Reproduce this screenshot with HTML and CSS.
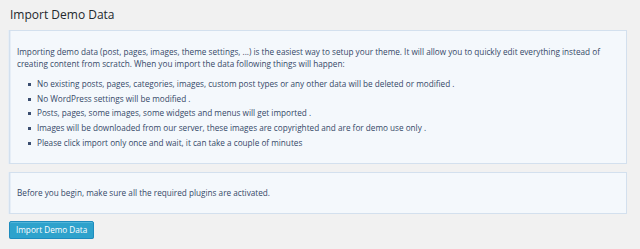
FILE: index.html
```html
<!DOCTYPE html>
<html>
<head>
<meta charset="utf-8">
<link rel="stylesheet" href="styles.css">
</head>
<body>
<div class="page">
  <h2 class="title">Import Demo Data</h2>
  <div class="box box-intro">
    <p class="lead">Importing demo data (post, pages, images, theme settings, ...) is the easiest way to setup your theme. It will allow you to quickly edit everything instead of creating content from scratch. When you import the data following things will happen:</p>
    <ul class="list">
      <li>No existing posts, pages, categories, images, custom post types or any other data will be deleted or modified .</li>
      <li>No WordPress settings will be modified .</li>
      <li>Posts, pages, some images, some widgets and menus will get imported .</li>
      <li>Images will be downloaded from our server, these images are copyrighted and are for demo use only .</li>
      <li>Please click import only once and wait, it can take a couple of minutes</li>
    </ul>
  </div>
  <div class="box box-note">
    <p class="note">Before you begin, make sure all the required plugins are activated.</p>
  </div>
  <button class="btn">Import Demo Data</button>
</div>
</body>
</html>
```
FILE: styles.css
```css
html, body {
  margin: 0;
  padding: 0;
  background: #f1f1f1;
}
body {
  font-family: "Open Sans", "Noto Sans", sans-serif;
  color: #344868;
}
.page {
  padding: 6px 13px 0 9px;
  display: flex;
  flex-direction: column;
  align-items: flex-start;
}
.title {
  font-size: 12px;
  font-weight: 400;
  color: #23282d;
  margin: 0 0 6px 1px;
  line-height: 18px;
}
.box {
  align-self: stretch;
  background: #f4f8fc;
  border: 1px solid #d3e0ee;
  box-shadow: inset 1px 0 0 #e6eef7, -1px 0 0 #e8eef5;
  box-sizing: border-box;
}
.box-intro {
  padding: 15px 7px 12px 7px;
  margin-bottom: 8px;
}
.lead {
  margin: 0 0 7px 0;
  font-size: 8.2px;
  line-height: 12px;
}
.list {
  margin: 0;
  padding: 0 0 0 8px;
  list-style: none;
}
.list li {
  font-size: 8.2px;
  line-height: 14.7px;
  position: relative;
  padding-left: 12px;
}
.list li::before {
  content: "";
  position: absolute;
  left: 3px;
  top: 6px;
  width: 3px;
  height: 3px;
  background: #3a4e70;
}
.box-note {
  padding: 14px 7px 14px 7px;
  margin-bottom: 7px;
}
.note {
  margin: 0;
  font-size: 8.2px;
  line-height: 12px;
}
.btn {
  font-family: "Open Sans", "Noto Sans", sans-serif;
  font-size: 8.2px;
  color: #fff;
  background: #2ea2cc;
  border: 1px solid #1e8cbe;
  border-radius: 2px;
  box-shadow: inset 0 1px 0 rgba(120,200,230,.5), 0 1px 0 rgba(0,0,0,.15);
  height: 18px;
  line-height: 14px;
  padding: 0 6px;
  margin-left: 0;
}
```
